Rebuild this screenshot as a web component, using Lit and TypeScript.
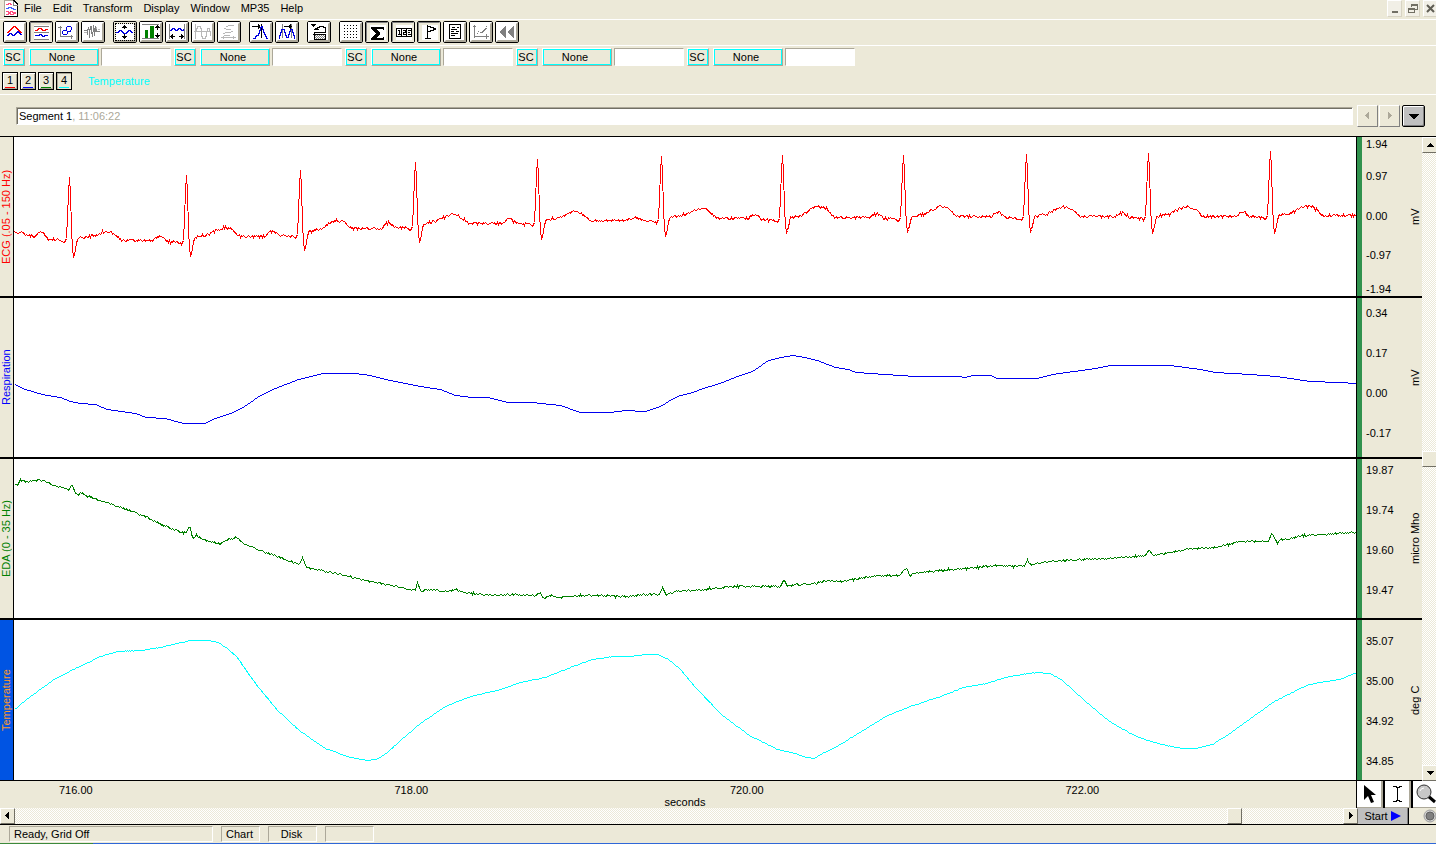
import { LitElement, html, svg, css, TemplateResult, SVGTemplateResult } from "lit";
import { customElement, property } from "lit/decorators.js";

type Point = [number, number];

/* ---------- signal data ---------- */

/** Small repeatable noise source, so that every redraw gives the same trace. */
function noise(seed: number) {
  let s = seed;
  return () => {
    s = (s * 16807) % 2147483647;
    return s / 2147483647 - 0.5;
  };
}

function toPairs(flat: number[]): Point[] {
  const out: Point[] = [];
  for (let i = 0; i < flat.length; i += 2) out.push([flat[i], flat[i + 1]]);
  return out;
}

/** Resamples the points at one-pixel steps and adds noise; steep parts stay clean. */
function roughen(points: Point[], amount: number, seed: number): Point[] {
  const next = noise(seed);
  const out: Point[] = [];
  for (let i = 0; i < points.length - 1; i++) {
    const [x0, y0] = points[i];
    const [x1, y1] = points[i + 1];
    const steep = Math.abs((y1 - y0) / (x1 - x0 || 1)) > 1.5;
    if (steep) {
      out.push([x0, y0]);
      continue;
    }
    for (let x = x0; x < x1; x += 1) {
      const y = y0 + ((y1 - y0) * (x - x0)) / (x1 - x0);
      out.push([x, y + next() * amount]);
    }
  }
  out.push(points[points.length - 1]);
  return out;
}

/** R x, R y, base, S y, P x, P y, T x, T y, level after S, level after T */
const BEATS = [
  [69, 177, 240, 256, 41, 231, 107, 231, 238, 240],
  [186, 175, 242, 255, 159, 235, 226, 227, 237, 236],
  [300, 170, 236, 249, 272, 230, 338, 220, 231, 228],
  [415, 162, 228, 241, 388, 222, 454, 214, 223, 223],
  [537, 159, 224, 238, 509, 218, 576, 211, 220, 220],
  [661, 156, 221, 235, 634, 216, 702, 208, 217, 218],
  [782, 155, 220, 232, 754, 214, 820, 206, 217, 217],
  [903, 155, 219, 231, 876, 213, 942, 206, 216, 216],
  [1026, 154, 218, 231, 998, 212, 1065, 206, 216, 216],
  [1148, 153, 218, 232, 1122, 212, 1188, 206, 216, 216],
  [1270, 151, 217, 232, 1242, 211, 1308, 205, 215, 215],
];

function ecgPoints(): Point[] {
  const pts: Point[] = [[14, 232], [20, 232], [27, 234]];
  let rest = 236;
  for (const [r, top, base, s, px, py, tx, ty, post, after] of BEATS) {
    pts.push(
      [px - 7, rest], [px - 2, py + 1], [px + 1, py], [px + 7, base - 1],
      [r - 7, base], [r - 5, base + 2], [r - 3, base - 2], [r - 2, base - 24],
      [r - 1, top + 16], [r, top], [r + 1, top + 16], [r + 2, base - 12],
      [r + 3, s - 8], [r + 4, s], [r + 5, s - 2], [r + 7, post + 5], [r + 8, post],
      [r + 20, post - 2], [tx - 10, ty + 3], [tx - 3, ty], [tx + 4, ty + 1],
      [tx + 9, ty + 5], [tx + 14, after],
    );
    rest = after;
  }
  pts.push([1356, 215]);
  return pts;
}

const RESPIRATION = toPairs([
  14, 384, 25, 389, 42, 394, 60, 397, 70, 401, 80, 403, 95, 404, 107, 409, 135, 413, 146, 417,
  165, 418, 183, 423, 205, 423, 212, 419, 230, 413, 244, 406, 260, 395, 275, 388, 298, 379,
  311, 376, 322, 373, 355, 373, 370, 375, 390, 380, 420, 386, 440, 389, 455, 395, 472, 397,
  488, 397, 508, 402, 532, 402, 560, 405, 580, 412, 610, 412, 625, 410, 645, 411, 660, 406,
  673, 398, 680, 395, 692, 392, 700, 389, 722, 382, 737, 376, 752, 371, 768, 360, 780, 357,
  793, 355, 805, 357, 817, 360, 835, 367, 848, 369, 856, 372, 885, 374, 915, 376, 958, 376,
  965, 377, 972, 375, 990, 375, 997, 378, 1036, 378, 1052, 374, 1095, 368, 1110, 365,
  1170, 365, 1200, 369, 1215, 372, 1250, 374, 1276, 376, 1290, 378, 1310, 381, 1340, 382,
  1356, 383,
]);

const EDA = toPairs([
  14, 485, 17, 484, 20, 480, 26, 481, 37, 480, 44, 480, 50, 484, 60, 486, 65, 488, 68, 490,
  71, 485, 72, 485, 75, 493, 78, 494, 80, 492, 85, 495, 100, 500, 120, 507, 145, 516, 165, 526,
  183, 532, 186, 532, 188, 527, 190, 527, 191, 535, 193, 537, 196, 535, 205, 540, 220, 543,
  226, 540, 231, 538, 236, 537, 243, 543, 252, 547, 280, 557, 298, 564, 300, 562, 302, 557,
  304, 562, 306, 567, 320, 570, 345, 575, 370, 581, 395, 586, 415, 590, 417, 582, 420, 590,
  422, 592, 425, 589, 440, 590, 448, 591, 456, 589, 465, 592, 490, 595, 510, 594, 536, 595,
  538, 592, 540, 592, 542, 598, 550, 595, 560, 597, 575, 595, 600, 595, 625, 596, 645, 594,
  659, 594, 662, 587, 666, 595, 675, 591, 703, 589, 735, 586, 780, 586, 783, 580, 784, 580,
  787, 586, 795, 584, 815, 583, 825, 580, 840, 581, 876, 575, 900, 575, 904, 569, 907, 569,
  909, 576, 914, 573, 930, 571, 975, 567, 1000, 565, 1024, 566, 1027, 560, 1031, 565,
  1040, 562, 1080, 559, 1110, 558, 1145, 555, 1149, 549, 1153, 555, 1190, 548, 1215, 547,
  1240, 541, 1268, 541, 1271, 534, 1272, 534, 1275, 540, 1277, 542, 1280, 539, 1292, 538,
  1302, 535, 1340, 533, 1356, 532,
]);

const TEMPERATURE = toPairs([
  14, 709, 30, 696, 52, 680, 75, 668, 90, 661, 100, 656, 117, 651, 140, 650, 160, 647, 180, 642,
  192, 640, 208, 640, 218, 642, 227, 648, 236, 656, 255, 683, 277, 710, 300, 731, 325, 748,
  350, 757, 366, 760, 376, 759, 386, 753, 400, 740, 420, 723, 445, 706, 470, 696, 497, 690,
  520, 682, 545, 677, 570, 667, 592, 659, 612, 656, 630, 656, 645, 654, 657, 654, 668, 659,
  680, 669, 695, 687, 722, 715, 749, 735, 777, 749, 795, 753, 806, 757, 814, 758, 822, 753,
  833, 748, 856, 734, 887, 715, 910, 706, 940, 696, 963, 687, 986, 683, 1005, 677, 1028, 673,
  1038, 672, 1049, 673, 1059, 678, 1070, 687, 1086, 702, 1109, 721, 1132, 734, 1147, 740,
  1162, 744, 1181, 748, 1195, 748, 1212, 744, 1231, 732, 1254, 715, 1274, 701, 1306, 685,
  1319, 682, 1339, 679, 1356, 672,
]);

interface Channel {
  id: string;
  label: string;
  unit: string;
  ticks: string[];
  viewBox: string;
  points: Point[];
}

const CHANNELS: Channel[] = [
  { id: "ecg", label: "ECG (.05 - 150 Hz)", unit: "mV", ticks: ["1.94", "0.97", "0.00", "-0.97", "-1.94"], viewBox: "14 137 1342 159", points: roughen(ecgPoints(), 2.8, 4711) },
  { id: "resp", label: "Respiration", unit: "mV", ticks: ["0.34", "0.17", "0.00", "-0.17"], viewBox: "14 298 1342 159", points: roughen(RESPIRATION, 0, 1) },
  { id: "eda", label: "EDA (0 - 35 Hz)", unit: "micro Mho", ticks: ["19.87", "19.74", "19.60", "19.47"], viewBox: "14 459 1342 159", points: roughen(EDA, 2, 1234) },
  { id: "temp", label: "Temperature", unit: "deg C", ticks: ["35.07", "35.00", "34.92", "34.85"], viewBox: "14 620 1342 160", points: roughen(TEMPERATURE, 0.5, 99) },
];

/* ---------- toolbar icons, each on an 18 x 16 grid ---------- */

const K = "#000";
const G = "#808080";
const L = "#b8b8b8";
const B = "#0000e0";
const line = (d: string, stroke: string) => svg`<path d=${d} fill="none" stroke=${stroke}/>`;
const fill = (d: string, color: string) => svg`<path d=${d} fill=${color}/>`;

const ICONS: Record<string, SVGTemplateResult[]> = {
  overlap: [
    line("M1 8.500h1v-1h1v-1h1v-1h1v-1h1v-1h1v-1h2v1h1v1h1v1h1v1h1v1h1v1h2", "#f00"),
    line("M1 11.500h1v-1h1v-1h2v1h1v1h2v-1h1v-1h1v-1h1v-1h1v1h1v1h1v1h2", B),
  ],
  stack: [
    line("M0 1.500h15M0 7.500h15M0 14.500h15", G),
    line("M1 5.500h2v-1h1v-1h3v1h1v1h3v-1h3", "#f00"),
    line("M1 10.500h4v-1h2v1h1v1h2v-1h4", B),
  ],
  xy: [
    line("M0 3.500h4M2.500 2v11M2 12.500h13M13.500 11v4", G),
    line("M9 2.500h4M8.500 3v3M13.500 3v3M9 7.500h4M12.500 6v2M5 6.500h4M4.500 7v3M5 10.500h4M9.500 8v2", B),
  ],
  spikes: [
    line("M0 6.500h4M3.500 5v6M4.500 3v3M5.500 5v9M6.500 2v4M7.500 2v8M8.500 8v5M9.500 1v7M10.500 4v8M11.500 2v6M12.500 5v2M11 7.500h5", G),
    line("M0 8.500h3M12.500 3v2M14 5.500h2", L),
  ],
  autoY: [
    line("M8.500 1v4M6 3.500h5M7 2.500h3M8.500 10v5M6 12.500h5M7 13.500h3", K),
    line("M0 8.500h2v-1h1v-1h2v1h1v1h1v1h3v-1h1v-1h1v-1h2v1h1v1h2", B),
  ],
  bars: [
    line("M0 .5h17M0 14.500h17", G),
    fill("M3 6h3v8H3zM8 2h4v12H8z", "#008000"),
    line("M15.500 1v5M13 3.500h5M14 2.500h3M15.500 9v5M13 11.500h5M14 12.500h3", K),
  ],
  autoX: [
    line("M1.500 0v15M16.500 0v15", G),
    line("M2 6.500h1v-1h1v-1h2v1h1v1h2v-1h1v-1h2v1h1v1h2v-1h1", B),
    line("M2 12.500h5M11 12.500h5M4.500 10v5M13.500 10v5M3.500 11v3M14.500 11v3", K),
  ],
  sine: [
    line("M1.500 0v15M0 7.500h17", L),
    line("M2.500 8v-4h1v-2h3v2h1v8h1v2h3v-2h1v-5h1v-3h2v3h1v5", L),
  ],
  sineX: [
    line("M8 1.500h6M6 2.500h2M4 4.500h2M6 5.500h5M11 7.500h2M5 8.500h6M3 9.500h2M4 11.500h6", L),
    line("M1 13.500h15M3.500 12v3M13.500 12v3", L),
  ],
  peak: [
    line("M0 2.500h8M6.500 0v5M7.500 1v3M9.500 0v14", K),
    line("M1 14.500h2v-2h1v-1h2v-2h1v-3h1v-3h1v-1h1v3h1v3h1v2h1v2h1v2h2", B),
  ],
  peaks: [
    line("M4.500 0v14M13.500 0v14", G),
    line("M6 2.500h8M12.500 0v5M11.500 1v3", K),
    line("M1 14.500v-3h1v-3h1v-3h3v3h1v3h1v2h2v-3h1v-3h1v-2h2v3h1v3h1v3h1", B),
  ],
  replay: [
    fill("M1 0h5v1H5v1H4v1H3V2H2V1H1z", K),
    line("M5 4.500h2v-1h2v-1h4v1h2v1h1M4 5.500h5M4.500 8v3M5 8.500h11M3 10.500h12.500v5H4v-5M15.500 4v4", K),
    svg`<path d="M5 11.500h10M6 12.500h9M5 13.500h10M6 14.500h9" stroke=${G} stroke-dasharray="1 1" fill="none"/>`,
  ],
  grid: [
    svg`${[1, 4, 7, 10, 13].map((y) => svg`<path d="M2 ${y + 0.5}h14" stroke="#000" stroke-dasharray="1 2" fill="none"/>`)}`,
  ],
  sigma: [fill("M1 2h13v3h-1v-1H6l4 4v1l-4 4h7v-1h1v3H1v-2l5-5-5-4z", K)],
  counter: [
    line("M.5 3.500h15v8H.5zM5.500 3v9M10.500 3v9M2 5.500h1.500v4M2 9.500h3M7 5.500h2v2h-2v2h2.500M12 5.500h2.500M12 7.500h2M12 9.500h3", K),
  ],
  marker: [line("M5.500 0v14M3 13.500h6M6 1.500h2v1h3v1h2v1h-2v1h-3v1h-2", K)],
  journal: [
    line("M3.500.5h11v14h-11zM6 3.500h3M11 3.500h2M5 5.500h6M5 7.500h3M10 7.500h3M5 9.500h7M5 11.500h4", K),
  ],
  plot: [
    line("M2.500 1v13M1 2.500h3M2 12.500h15M14.500 10v5M5 9.500h1M6 7.500h1M8 8.500h2v-1h1v-1h1v-1h1v-1h2M14 2.500h1", G),
  ],
  rewind: [fill("M8 1v14L1 8zM16 1v14L9 8z", G)],
};

interface Tool { icon: string; name: string; pressed?: boolean; focus?: boolean }
const TOOL_GROUPS: Tool[][] = [
  [{ icon: "overlap", name: "Overlap mode" }, { icon: "stack", name: "Chart mode", pressed: true }, { icon: "xy", name: "X/Y mode" }, { icon: "spikes", name: "Overlap segments" }],
  [{ icon: "autoY", name: "Autoscale waveforms", focus: true }, { icon: "bars", name: "Compare waveforms" }, { icon: "autoX", name: "Autoscale horizontal" }, { icon: "sine", name: "Zoom back" }, { icon: "sineX", name: "Zoom forward" }],
  [{ icon: "peak", name: "Find peak" }, { icon: "peaks", name: "Find next peak" }],
  [{ icon: "replay", name: "Open journal file" }],
  [{ icon: "grid", name: "Show grid" }, { icon: "sigma", name: "Show measurements", pressed: true }, { icon: "counter", name: "Show channel buttons", pressed: true }, { icon: "marker", name: "Show markers", pressed: true }, { icon: "journal", name: "Show journal" }, { icon: "plot", name: "Show hardware" }, { icon: "rewind", name: "Rewind" }],
];

/* ---------- elements ---------- */

@customElement("tool-button")
export class ToolButton extends LitElement {
  @property() icon = "";
  @property() name = "";
  @property({ type: Boolean }) pressed = false;
  @property({ type: Boolean }) dotted = false;

  static styles = css`
    :host { display: block; }
    button {
      box-sizing: border-box;
      display: flex;
      width: 24px;
      height: 22px;
      padding: 0;
      border: 1px solid #000;
      border-radius: 2px;
      background: #ece9d8;
    }
    .face {
      box-sizing: border-box;
      flex: none;
      width: 22px;
      height: 20px;
      border: 2px solid;
      border-color: #fff #aca899 #aca899 #fff;
    }
    .face svg { display: block; width: 18px; height: 16px; background: #fff; }
    .dotted .face { border-color: #ece9d8 #aca899 #aca899 #ece9d8; }
    .dotted .face svg { outline: 1px dotted #000; }
    .pressed .face {
      border-width: 1px;
      border-color: #808080 #ece9d8 #ece9d8 #808080;
      padding: 2px 0 0 3px;
    }
    .pressed .face svg { width: 16px; height: 15px; }
  `;

  render() {
    const box = this.pressed ? "0 0 16 15" : "0 0 18 16";
    return html`
      <button class=${this.pressed ? "pressed" : this.dotted ? "dotted" : "raised"} title=${this.name} aria-label=${this.name}>
        <span class="face"><svg viewBox=${box} shape-rendering="crispEdges">${ICONS[this.icon]}</svg></span>
      </button>`;
  }
}

@customElement("signal-track")
export class SignalTrack extends LitElement {
  @property({ attribute: false }) channel!: Channel;

  static styles = css`
    :host {
      box-sizing: border-box;
      display: flex;
      min-height: 0;
      border-bottom: 2px solid #000;
    }
    :host(:last-child) { border-bottom-width: 1px; }
    .name, .unit {
      display: flex;
      justify-content: center;
      align-items: center;
      writing-mode: vertical-rl;
      transform: rotate(180deg);
      white-space: nowrap;
      line-height: 13px;
    }
    .name { width: 13px; }
    .name.ecg { color: #f00; }
    .name.resp { color: #00f; }
    .name.eda { color: #008000; }
    .name.temp { color: #ff9a1e; background: #0054e3; }
    .plot {
      flex: 1;
      min-width: 0;
      background: #fff;
      border-left: 1px solid #000;
      border-right: 1px solid #000;
    }
    .plot svg { display: block; width: 100%; height: 100%; }
    .trace { fill: none; stroke-width: 1px; vector-effect: non-scaling-stroke; }
    .trace.ecg { stroke: #f00; }
    .trace.resp { stroke: #0000f0; }
    .trace.eda { stroke: #008000; }
    .trace.temp { stroke: #0ff; }
    .scale {
      box-sizing: border-box;
      display: flex;
      justify-content: space-between;
      width: 65px;
      border-left: 5px solid #31924e;
      padding-left: 4px;
    }
    .ticks {
      box-sizing: border-box;
      display: flex;
      flex-direction: column;
      justify-content: space-between;
      line-height: 12px;
    }
    .ticks.resp { padding: 9px 0 18px; }
    .ticks.eda { padding: 5px 0 22px; }
    .ticks.temp { padding: 15px 0 13px; }
    .ticks.ecg span { display: flex; flex: 1; align-items: center; }
    .ticks.ecg span:first-child { flex: 0 0 18px; align-items: flex-start; padding-top: 1px; }
    .ticks.ecg span:last-child { flex: 0 0 20px; align-items: flex-end; padding-bottom: 1px; }
  `;

  render() {
    const c = this.channel;
    const pts = c.points.map(([x, y]) => `${x + 0.5},${Math.round(y) + 0.5}`).join(" ");
    return html`
      <div class="name ${c.id}">${c.label}</div>
      <div class="plot">
        <svg viewBox=${c.viewBox} preserveAspectRatio="none" shape-rendering="crispEdges" role="img" aria-label=${c.label}>
          <polyline class="trace ${c.id}" points=${pts}></polyline>
        </svg>
      </div>
      <div class="scale">
        <div class="ticks ${c.id}">${c.ticks.map((t) => html`<span>${t}</span>`)}</div>
        <div class="unit">${c.unit}</div>
      </div>`;
  }
}

const arrow = (d: string, color = "#000"): TemplateResult =>
  html`<svg class="arrow" viewBox="0 0 8 8" shape-rendering="crispEdges"><path d=${d} fill=${color}></path></svg>`;
const LEFT = "M5 0v7h-1v-1h-1v-1h-1v-1h-1v-1h1v-1h1v-1h1v-1z";
const RIGHT = "M2 0h1v1h1v1h1v1h1v1h-1v1h-1v1h-1v1h-1z";
const UP = "M4 2h1v1h1v1h1v1h1v1H1v-1h1v-1h1v-1h1z";
const DOWN = "M1 2h7v1h-1v1h-1v1h-1v1h-1v-1h-1v-1h-1v-1h-1z";

@customElement("app-root")
export class AppRoot extends LitElement {
  static styles = css`
    :host {
      display: flex;
      flex-direction: column;
      height: 100vh;
      overflow: hidden;
      background: #ece9d8;
      color: #000;
      font: 11px "Liberation Sans", Arial, sans-serif;
    }
    button, input { font: inherit; color: inherit; margin: 0; }
    button { box-sizing: border-box; padding: 0; display: flex; align-items: center; justify-content: center; }

    .menubar {
      display: flex;
      align-items: flex-start;
      height: 19px;
      padding-left: 4px;
      border-bottom: 1px solid #fff;
    }
    .doc { width: 14px; height: 17px; }
    .menus { display: flex; flex: 1; }
    .menus button { height: 16px; padding: 0 5px 0 6px; border: 0; background: none; }
    .window-buttons { display: flex; gap: 3px; height: 17px; margin-right: -2px; }
    .window-buttons button {
      width: 15px;
      height: 17px;
      border: 1px solid;
      border-color: #fff #d8d4c4 #d8d4c4 #fff;
      background: #f1efe6;
    }
    .window-buttons svg { flex: none; width: 10px; height: 10px; }

    .toolbar {
      display: flex;
      gap: 8px;
      height: 24px;
      padding: 1px 3px 0;
      border-bottom: 1px solid #fff;
    }
    .group { display: flex; gap: 2px; }

    .info { height: 48px; border-bottom: 1px solid #fff; }
    .measures { display: flex; gap: 3px; height: 18px; padding: 2px 3px 0; }
    .measure { display: flex; gap: 2px; }
    .measure button {
      height: 18px;
      border: 1px solid;
      border-color: #fff #aca899 #aca899 #fff;
      background: #ece9d8;
      box-shadow: inset 0 0 0 1px #0ff;
    }
    .measure .source { width: 22px; margin-right: 2px; padding-right: 2px; }
    .measure .kind { width: 70px; padding-right: 4px; }
    .measure input {
      box-sizing: border-box;
      width: 70px;
      height: 18px;
      padding: 0 2px;
      border: 1px solid;
      border-color: #aca899 #fff #fff #aca899;
      border-radius: 0;
      background: #fff;
      outline: 0;
    }
    .channels { display: flex; align-items: center; gap: 2px; padding: 6px 2px 0; }
    .channels button {
      flex-direction: column;
      justify-content: flex-start;
      width: 16px;
      height: 18px;
      padding-top: 1px;
      border: 1px solid #000;
      background: #ece9d8;
      box-shadow: inset 1px 1px #fff, inset -1px -1px #aca899;
      line-height: 13px;
    }
    .channels button.on { box-shadow: inset 1px 1px #aca899; }
    .channels i { flex: none; width: 10px; height: 1px; }
    .c1 i { background: #f00; }
    .c2 i { background: #00f; }
    .c3 i { background: #008000; }
    .c4 i { background: #0ff; }
    .current { padding-left: 14px; color: #0ff; }

    .segment {
      display: flex;
      align-items: center;
      gap: 4px;
      height: 41px;
      padding: 0 11px 0 16px;
      border-bottom: 1px solid #000;
    }
    .segment-name {
      box-sizing: border-box;
      flex: 1;
      height: 18px;
      padding-left: 2px;
      border: 1px solid;
      border-color: #aca899 #fff #fff #aca899;
      box-shadow: inset 1px 1px #716f64;
      background: #fff;
      line-height: 17px;
    }
    .segment-name time { color: #aca899; }
    .steps { display: flex; gap: 1px; }
    .steps button {
      width: 21px;
      height: 22px;
      border: 1px solid;
      border-color: #fff #808080 #808080 #fff;
      background: #ece9d8;
    }
    .steps button.menu {
      width: 23px;
      margin-left: 1px;
      border: 1px solid #000;
      border-radius: 2px;
      background: #c0c0c0;
      box-shadow: inset 1px 1px #fff, inset -1px -1px #808080;
    }
    .arrow { flex: none; width: 8px; height: 8px; }
    .menu .arrow { width: 12px; height: 12px; }

    .chart { display: flex; flex: 1; min-height: 0; }
    .tracks { display: grid; flex: 1; min-width: 0; grid-template-rows: repeat(4, minmax(0, 1fr)); }
    .vscroll, .hscroll {
      display: flex;
      background: repeating-conic-gradient(#fff 0 25%, #ece9d8 0 50%) 0 0 / 2px 2px;
    }
    .vscroll { flex-direction: column; width: 14px; }
    .space { flex: 1; }
    .hscroll .before { flex: 12; }
    .bar {
      flex: none;
      border: 1px solid;
      border-color: #fff #716f64 #716f64 #fff;
      background: #ece9d8;
      box-sizing: border-box;
    }
    .vscroll .bar { width: 14px; height: 16px; border-right: 0; }
    .hscroll .bar { width: 15px; height: 16px; }

    .axis-row { display: flex; height: 27px; }
    .axis {
      display: grid;
      grid-template-columns: repeat(4, 1fr);
      flex: 1;
      padding-left: 14px;
      border-right: 1px solid #000;
      line-height: 12px;
      align-content: start;
      padding-top: 3px;
    }
    .axis span { padding-left: 45px; }
    .axis .title { grid-column: 1 / -1; padding: 0; text-align: center; }
    .cursors { display: flex; gap: 2px; width: 79px; background: #000; overflow: hidden; }
    .cursors button {
      flex: none;
      width: 26px;
      height: 27px;
      border: 0;
      border-right: 2px solid #aca899;
      border-bottom: 1px solid #aca899;
      background: #fff;
    }
    .cursors svg { flex: none; width: 24px; height: 26px; }

    .scroll-row { display: flex; height: 16px; }
    .hscroll { flex: 1; }
    .start {
      width: 50px;
      gap: 3px;
      border: 0;
      border-right: 1px solid #808080;
      background: #c0c0c0;
    }
    .start svg { flex: none; width: 10px; height: 10px; }
    .lamp {
      display: flex;
      justify-content: flex-end;
      align-items: center;
      width: 27px;
      border-left: 1px solid #000;
      overflow: hidden;
    }
    .lamp svg { flex: none; width: 13px; height: 14px; }

    .status {
      display: flex;
      align-items: flex-start;
      gap: 8px;
      height: 17px;
      padding: 1px 9px 0;
      border-top: 1px solid #000;
    }
    .status div {
      box-sizing: border-box;
      width: 49px;
      height: 16px;
      padding-right: 2px;
      border: 1px solid;
      border-color: #aca899 #fff #fff #aca899;
      line-height: 14px;
      text-align: center;
    }
    .status div.message { width: 204px; padding-left: 4px; text-align: left; }
    .status div.mode { width: 39px; }
    .taskbar { display: flex; height: 1px; background: #2f67d8; }
    .taskbar span { width: 93px; background: #3c8a3c; }
  `;

  render() {
    return html`
      <div class="menubar">
        <svg class="doc" viewBox="0 0 14 17" shape-rendering="crispEdges">
          <path d="M0 0h10l4 4v13H0z" fill="#fff"></path>
          <path d="M.5 0v16M0 .5h10" fill="none" stroke="#aca899"></path>
          <path d="M13.500 4v12.500H0M9 .5h1v1h1v1h1v1h2" fill="none" stroke="#000"></path>
          <path d="M9.500 1v4h4" fill="none" stroke="#808080"></path>
          <path d="M2 4.500h2v-1h2v1h2M2 11.500h2v1h2v-1h2v1h4M2 14.500h2v-1h2v1h3v-1h3" fill="none" stroke="#ff5080"></path>
          <path d="M2 8.500h2v-1h3v1h2v1h3" fill="none" stroke="#4060ff"></path>
        </svg>
        <nav class="menus">
          ${["File", "Edit", "Transform", "Display", "Window", "MP35", "Help"].map((m) => html`<button>${m}</button>`)}
        </nav>
        <div class="window-buttons">
          <button aria-label="Minimize"><svg viewBox="0 0 10 10" shape-rendering="crispEdges"><path d="M2 7h6v2H2z" fill="#716f64"></path></svg></button>
          <button aria-label="Restore"><svg viewBox="0 0 10 10" shape-rendering="crispEdges"><path d="M3.500 3V.5h6v5H7M3 1.500h7M.5 4.500h6v4h-6zM0 5.500h7" fill="none" stroke="#716f64"></path></svg></button>
          <button aria-label="Close"><svg viewBox="0 0 10 10"><path d="M1 1l7 7M8 1l-7 7" stroke="#5f5d54" stroke-width="2"></path></svg></button>
        </div>
      </div>

      <div class="toolbar">
        ${TOOL_GROUPS.map((g) => html`<div class="group">
          ${g.map((t) => html`<tool-button .icon=${t.icon} .name=${t.name} ?pressed=${t.pressed} ?dotted=${t.focus}></tool-button>`)}
        </div>`)}
      </div>

      <div class="info">
        <div class="measures">
          ${[1, 2, 3, 4, 5].map((n) => html`<div class="measure">
            <button class="source">SC</button>
            <button class="kind">None</button>
            <input readonly aria-label="Measurement ${n} result">
          </div>`)}
        </div>
        <div class="channels">
          ${[1, 2, 3, 4].map((n) => html`<button class="c${n} ${n === 4 ? "on" : ""}">${n}<i></i></button>`)}
          <span class="current">Temperature</span>
        </div>
      </div>

      <div class="segment">
        <div class="segment-name">Segment 1<time>, 11:06:22</time></div>
        <div class="steps">
          <button disabled aria-label="Previous segment">${arrow(LEFT, "#aca899")}</button>
          <button disabled aria-label="Next segment">${arrow(RIGHT, "#aca899")}</button>
          <button class="menu" aria-label="Segment list">
            <svg class="arrow" viewBox="0 0 12 12" shape-rendering="crispEdges"><path d="M1 4h10v1h-1v1h-1v1h-1v1h-1v1h-2v-1h-1v-1h-1v-1h-1v-1h-1z"></path></svg>
          </button>
        </div>
      </div>

      <div class="chart">
        <div class="tracks">
          ${CHANNELS.map((c) => html`<signal-track .channel=${c}></signal-track>`)}
        </div>
        <div class="vscroll">
          <button class="bar" aria-label="Scroll up">${arrow(UP)}</button>
          <div class="space before"></div>
          <div class="bar"></div>
          <div class="space"></div>
          <button class="bar" aria-label="Scroll down">${arrow(DOWN)}</button>
        </div>
      </div>

      <div class="axis-row">
        <div class="axis">
          ${["716.00", "718.00", "720.00", "722.00"].map((t) => html`<span>${t}</span>`)}
          <span class="title">seconds</span>
        </div>
        <div class="cursors">
          <button aria-label="Arrow tool">
            <svg viewBox="0 0 24 26"><path d="M7 4v15l4-4 3 7 3-1-3-7h5z"></path></svg>
          </button>
          <button aria-label="I-beam tool">
            <svg viewBox="0 0 24 26" shape-rendering="crispEdges"><path d="M8 5.500h3v1h3v-1h3M12.500 7v12M8 20.500h3v-1h3v1h3" fill="none" stroke="#000"></path></svg>
          </button>
          <button aria-label="Zoom tool">
            <svg viewBox="0 0 24 26"><path d="M15 15l7 6" stroke="#000" stroke-width="3"></path><circle cx="11" cy="11" r="7" fill="#c8c8c8" stroke="#303030"></circle><path d="M7 10q1-3 4-3" fill="none" stroke="#fff"></path></svg>
          </button>
        </div>
      </div>

      <div class="scroll-row">
        <div class="hscroll">
          <button class="bar" aria-label="Scroll left">${arrow(LEFT)}</button>
          <div class="space before"></div>
          <div class="bar"></div>
          <div class="space"></div>
          <button class="bar" aria-label="Scroll right">${arrow(RIGHT)}</button>
        </div>
        <button class="start">Start<svg viewBox="0 0 10 10"><path d="M0 0l10 5-10 5z" fill="#00f"></path></svg></button>
        <div class="lamp">
          <svg viewBox="0 0 13 14"><circle cx="7" cy="7" r="6" fill="#d0d0d0" stroke="#a0a0a0"></circle><circle cx="7" cy="7" r="4" fill="#808080" stroke="#606060"></circle></svg>
        </div>
      </div>

      <div class="status">
        <div class="message">Ready, Grid Off</div>
        <div class="mode">Chart</div>
        <div>Disk</div>
        <div></div>
      </div>
      <div class="taskbar"><span></span></div>
    `;
  }
}
